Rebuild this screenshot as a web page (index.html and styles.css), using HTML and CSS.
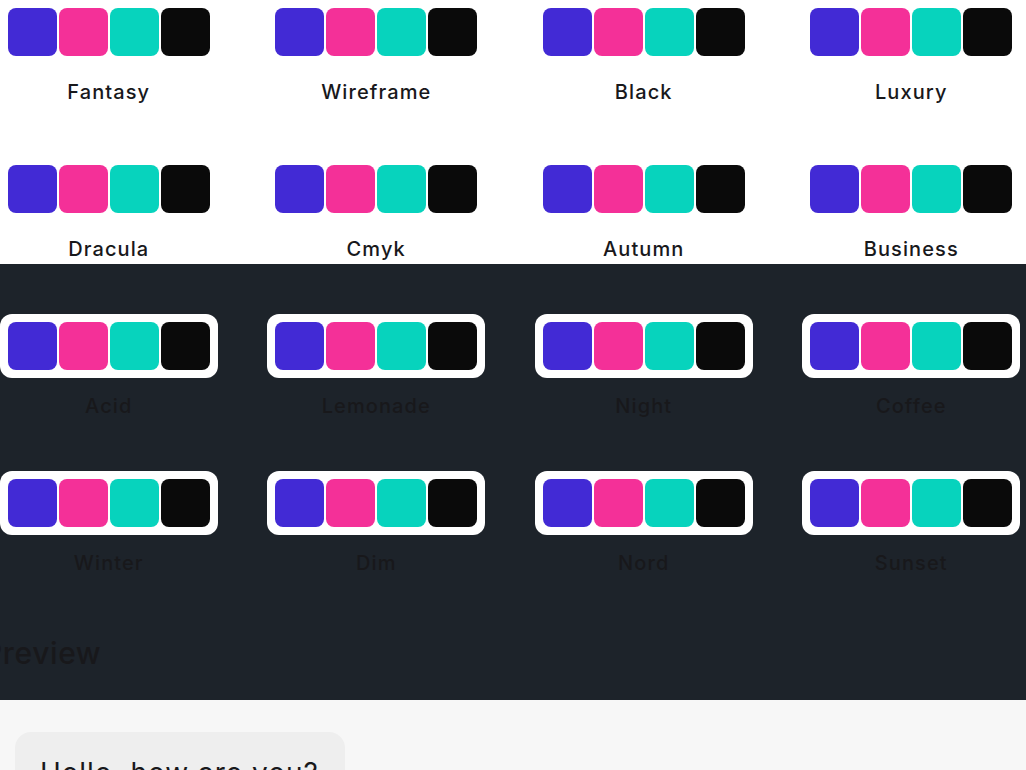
FILE: index.html
```html
<!DOCTYPE html>
<html lang="en">
<head>
<meta charset="utf-8">
<title>Themes</title>
<link rel="stylesheet" href="styles.css">
</head>
<body>
<div class="page">
  <section class="themes light">
    <div class="grid">
      <div class="theme"><div class="palette"><span class="sw p"></span><span class="sw s"></span><span class="sw a"></span><span class="sw n"></span></div><div class="name">Fantasy</div></div>
      <div class="theme"><div class="palette"><span class="sw p"></span><span class="sw s"></span><span class="sw a"></span><span class="sw n"></span></div><div class="name">Wireframe</div></div>
      <div class="theme"><div class="palette"><span class="sw p"></span><span class="sw s"></span><span class="sw a"></span><span class="sw n"></span></div><div class="name">Black</div></div>
      <div class="theme"><div class="palette"><span class="sw p"></span><span class="sw s"></span><span class="sw a"></span><span class="sw n"></span></div><div class="name">Luxury</div></div>
      <div class="theme"><div class="palette"><span class="sw p"></span><span class="sw s"></span><span class="sw a"></span><span class="sw n"></span></div><div class="name">Dracula</div></div>
      <div class="theme"><div class="palette"><span class="sw p"></span><span class="sw s"></span><span class="sw a"></span><span class="sw n"></span></div><div class="name">Cmyk</div></div>
      <div class="theme"><div class="palette"><span class="sw p"></span><span class="sw s"></span><span class="sw a"></span><span class="sw n"></span></div><div class="name">Autumn</div></div>
      <div class="theme"><div class="palette"><span class="sw p"></span><span class="sw s"></span><span class="sw a"></span><span class="sw n"></span></div><div class="name">Business</div></div>
    </div>
  </section>
  <section class="themes dark">
    <div class="grid">
      <div class="theme"><div class="palette boxed"><span class="sw p"></span><span class="sw s"></span><span class="sw a"></span><span class="sw n"></span></div><div class="name">Acid</div></div>
      <div class="theme"><div class="palette boxed"><span class="sw p"></span><span class="sw s"></span><span class="sw a"></span><span class="sw n"></span></div><div class="name">Lemonade</div></div>
      <div class="theme"><div class="palette boxed"><span class="sw p"></span><span class="sw s"></span><span class="sw a"></span><span class="sw n"></span></div><div class="name">Night</div></div>
      <div class="theme"><div class="palette boxed"><span class="sw p"></span><span class="sw s"></span><span class="sw a"></span><span class="sw n"></span></div><div class="name">Coffee</div></div>
      <div class="theme"><div class="palette boxed"><span class="sw p"></span><span class="sw s"></span><span class="sw a"></span><span class="sw n"></span></div><div class="name">Winter</div></div>
      <div class="theme"><div class="palette boxed"><span class="sw p"></span><span class="sw s"></span><span class="sw a"></span><span class="sw n"></span></div><div class="name">Dim</div></div>
      <div class="theme"><div class="palette boxed"><span class="sw p"></span><span class="sw s"></span><span class="sw a"></span><span class="sw n"></span></div><div class="name">Nord</div></div>
      <div class="theme"><div class="palette boxed"><span class="sw p"></span><span class="sw s"></span><span class="sw a"></span><span class="sw n"></span></div><div class="name">Sunset</div></div>
    </div>
    <h2 class="heading">Preview</h2>
  </section>
  <section class="preview">
    <div class="bubble">Hello, how are you?</div>
  </section>
</div>
</body>
</html>
```

FILE: styles.css
```css
html, body {
  margin: 0;
  padding: 0;
}
body {
  width: 1026px;
  height: 770px;
  overflow: hidden;
  font-family: Inter, "Liberation Sans", sans-serif;
  background: #ffffff;
}
.page {
  display: flex;
  flex-direction: column;
}
.themes.light {
  background: #ffffff;
  height: 264px;
  flex: none;
}
.themes.dark {
  background: #1d232a;
  padding-top: 50px;
  height: 436px;
  box-sizing: border-box;
  flex: none;
}
.grid {
  display: grid;
  grid-template-columns: repeat(4, 267.5px);
  row-gap: 51px;
  margin-left: -25px;
}
.theme {
  display: flex;
  flex-direction: column;
  align-items: center;
}
.palette {
  display: flex;
  gap: 2.33px;
  padding: 8px;
  border-radius: 12px;
}
.palette.boxed {
  background: #ffffff;
}
.sw {
  width: 48.75px;
  height: 48px;
  border-radius: 8px;
  display: block;
}
.sw.p { background: #422ad5; }
.sw.s { background: #f43098; }
.sw.a { background: #07d3bd; }
.sw.n { background: #0a0a0a; }
.name {
  margin-top: 14px;
  font-size: 20px;
  line-height: 28px;
  font-weight: 500;
  letter-spacing: 1.1px;
  color: #18181b;
}
.heading {
  margin: 58px 0 0 -17px;
  font-size: 30px;
  line-height: 36px;
  font-weight: 500;
  letter-spacing: 0.6px;
  color: #18181b;
  white-space: nowrap;
}
.preview {
  background: #f7f7f7;
  height: 200px;
  padding: 32px 0 0 15px;
  box-sizing: border-box;
  flex: none;
}
.bubble {
  width: 330px;
  box-sizing: border-box;
  background: #eeeeee;
  border-radius: 16px;
  padding: 23px 25px 16px;
  font-size: 28px;
  line-height: 36px;
  letter-spacing: 1px;
  color: #18181b;
  white-space: nowrap;
}
```
